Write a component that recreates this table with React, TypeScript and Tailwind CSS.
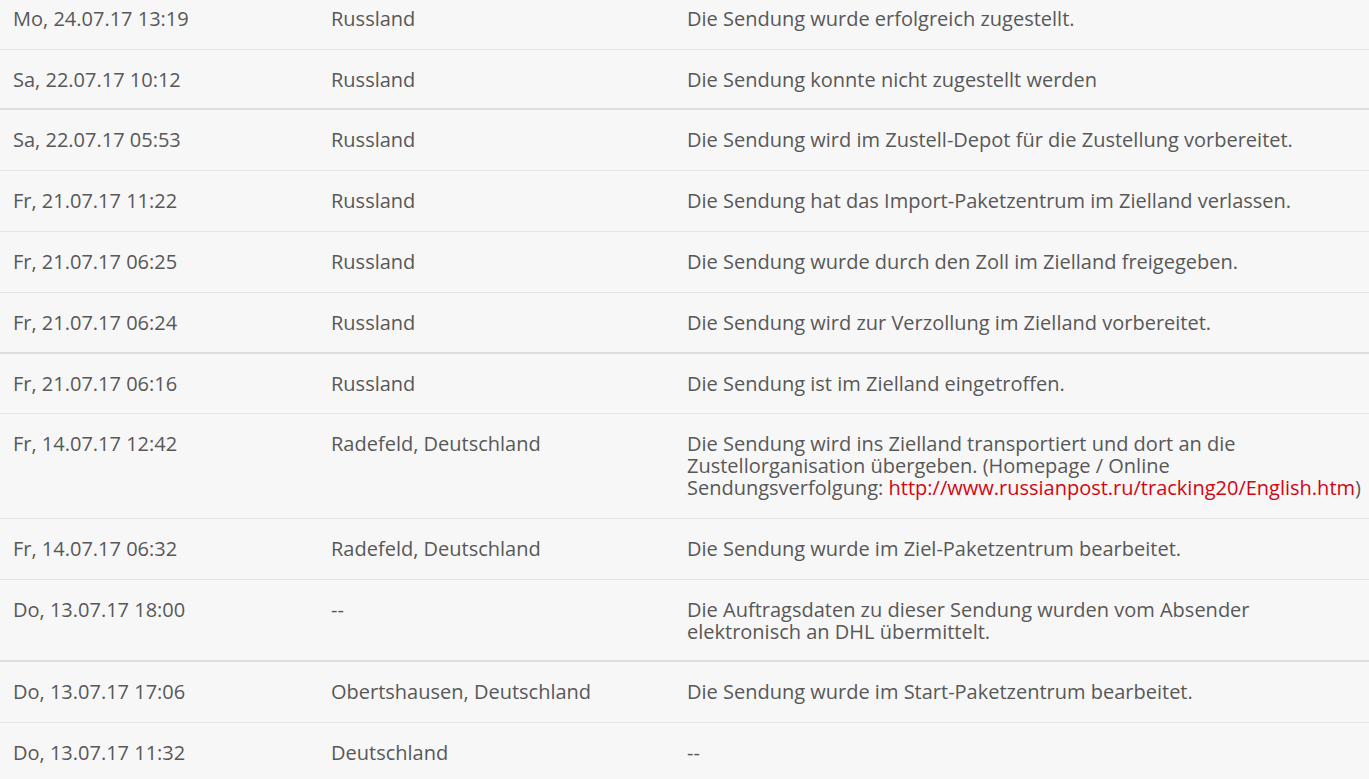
import React from "react";

type Row = { date: string; place: string; status: React.ReactNode; cls: string };

const thin = "pb-[19px] border-b border-[#e4e4e4]";
const thin60 = "pb-[18px] border-b border-[#e4e4e4]";
const thick61 = "pb-[18px] border-b-2 border-[#dedede]";
const thick60 = "pb-[17px] border-b-2 border-[#dedede]";

const rows: Row[] = [
  { date: "Mo, 24.07.17 13:19", place: "Russland", status: "Die Sendung wurde erfolgreich zugestellt.", cls: thin },
  { date: "Sa, 22.07.17 10:12", place: "Russland", status: "Die Sendung konnte nicht zugestellt werden", cls: thick60 },
  { date: "Sa, 22.07.17 05:53", place: "Russland", status: "Die Sendung wird im Zustell-Depot für die Zustellung vorbereitet.", cls: thin },
  { date: "Fr, 21.07.17 11:22", place: "Russland", status: "Die Sendung hat das Import-Paketzentrum im Zielland verlassen.", cls: thin },
  { date: "Fr, 21.07.17 06:25", place: "Russland", status: "Die Sendung wurde durch den Zoll im Zielland freigegeben.", cls: thin },
  { date: "Fr, 21.07.17 06:24", place: "Russland", status: "Die Sendung wird zur Verzollung im Zielland vorbereitet.", cls: thick61 },
  { date: "Fr, 21.07.17 06:16", place: "Russland", status: "Die Sendung ist im Zielland eingetroffen.", cls: thin60 },
  {
    date: "Fr, 14.07.17 12:42",
    place: "Radefeld, Deutschland",
    status: (
      <>
        Die Sendung wird ins Zielland transportiert und dort an die
        <br />
        Zustellorganisation übergeben. (Homepage / Online
        <br />
        Sendungsverfolgung:{" "}
        <a className="text-[#d40511]" href="#">
          http://www.russianpost.ru/tracking20/English.htm
        </a>
        )
      </>
    ),
    cls: thin,
  },
  { date: "Fr, 14.07.17 06:32", place: "Radefeld, Deutschland", status: "Die Sendung wurde im Ziel-Paketzentrum bearbeitet.", cls: thin },
  {
    date: "Do, 13.07.17 18:00",
    place: "--",
    status: (
      <>
        Die Auftragsdaten zu dieser Sendung wurden vom Absender
        <br />
        elektronisch an DHL übermittelt.
      </>
    ),
    cls: thick60,
  },
  { date: "Do, 13.07.17 17:06", place: "Obertshausen, Deutschland", status: "Die Sendung wurde im Start-Paketzentrum bearbeitet.", cls: thin },
  { date: "Do, 13.07.17 11:32", place: "Deutschland", status: "--", cls: thin },
];

export default function App() {
  return (
    <div
      className="w-[1369px] h-[779px] overflow-hidden bg-[#f7f7f7] text-[#585858] text-[20px] leading-[22px]"
      style={{ fontFamily: '"Open Sans", "Noto Sans", sans-serif' }}
    >
      <div className="-mt-[11px]">
        {rows.map((r, i) => (
          <div key={i} className={`grid grid-cols-[318px_356px_1fr] pl-[13px] pt-[19px] ${r.cls}`}>
            <div>{r.date}</div>
            <div>{r.place}</div>
            <div className="whitespace-nowrap">{r.status}</div>
          </div>
        ))}
      </div>
    </div>
  );
}
